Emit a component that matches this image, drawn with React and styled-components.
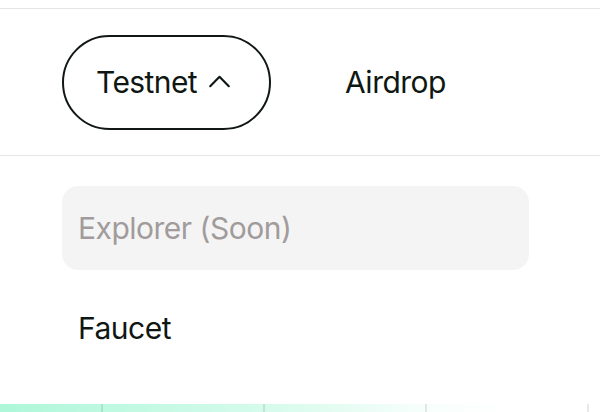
import React from 'react';
import { styled, createGlobalStyle } from 'styled-components';

const GlobalStyle = createGlobalStyle`
  html, body {
    margin: 0;
    padding: 0;
    background: #fff;
  }
  body {
    font-family: Inter, "Noto Sans", sans-serif;
    color: #0f1712;
    overflow: hidden;
  }
`;

const App = () => {
  return (
    <>
      <GlobalStyle />
      <Page>
        <NavBar>
          <MenuButton>
            Testnet
            <Chevron viewBox="0 0 24 14" aria-hidden="true">
              <path d="M2 12 L12 2 L22 12" />
            </Chevron>
          </MenuButton>
          <NavLink>Airdrop</NavLink>
        </NavBar>
        <Dropdown>
          <DropItem $disabled>Explorer (Soon)</DropItem>
          <DropItem>Faucet</DropItem>
        </Dropdown>
        <Strip>
          <StripCell $first />
          <StripCell />
          <StripCell />
          <StripCell />
          <StripCell />
        </Strip>
      </Page>
    </>
  );
};

export default App;

const Page = styled.div`
  padding-top: 8px;
  height: 404px;
  display: flex;
  flex-direction: column;
`;

const NavBar = styled.nav`
  display: flex;
  align-items: center;
  gap: 40px;
  height: 146px;
  padding-left: 62px;
  border-top: 1px solid #e6e6e6;
  border-bottom: 1px solid #e6e6e6;
`;

const MenuButton = styled.button`
  display: flex;
  align-items: center;
  gap: 11px;
  box-sizing: border-box;
  width: 209px;
  height: 95px;
  padding: 0 0 0 32px;
  border: 2px solid #111714;
  border-radius: 48px;
  background: #fff;
  font-family: Inter, "Noto Sans", sans-serif;
  font-size: 30px;
  font-weight: 400;
  letter-spacing: -0.6px;
  color: #0f1712;
`;

const Chevron = styled.svg`
  width: 23px;
  height: 13px;
  fill: none;
  stroke: #0f1712;
  stroke-width: 2.3px;
  stroke-linecap: round;
  stroke-linejoin: round;
  margin-top: -2px;
`;

const NavLink = styled.a`
  padding: 0 34px;
  font-size: 30px;
  letter-spacing: -0.5px;
  color: #0f1712;
`;

const Dropdown = styled.div`
  display: flex;
  flex-direction: column;
  gap: 16px;
  padding: 30px 0 0 62px;
  flex: 1;
`;

const DropItem = styled.div`
  box-sizing: border-box;
  width: 467px;
  height: 84px;
  display: flex;
  align-items: center;
  padding-left: 16px;
  border-radius: 16px;
  font-size: 30px;
  letter-spacing: -0.5px;
  background: ${p => (p.$disabled ? '#f4f4f4' : 'transparent')};
  color: ${p => (p.$disabled ? '#a19b9b' : '#0f1712')};
`;

const Strip = styled.div`
  display: flex;
  height: 8px;
  overflow: hidden;
  background: linear-gradient(90deg, #aef7d9 0%, #d6fbec 45%, #f6fefb 70%, #ffffff 85%);
`;

const StripCell = styled.div`
  box-sizing: border-box;
  flex: none;
  width: ${p => (p.$first ? '101px' : '162px')};
  border-left: ${p => (p.$first ? 'none' : '2px solid rgba(0, 0, 0, 0.09)')};
`;
